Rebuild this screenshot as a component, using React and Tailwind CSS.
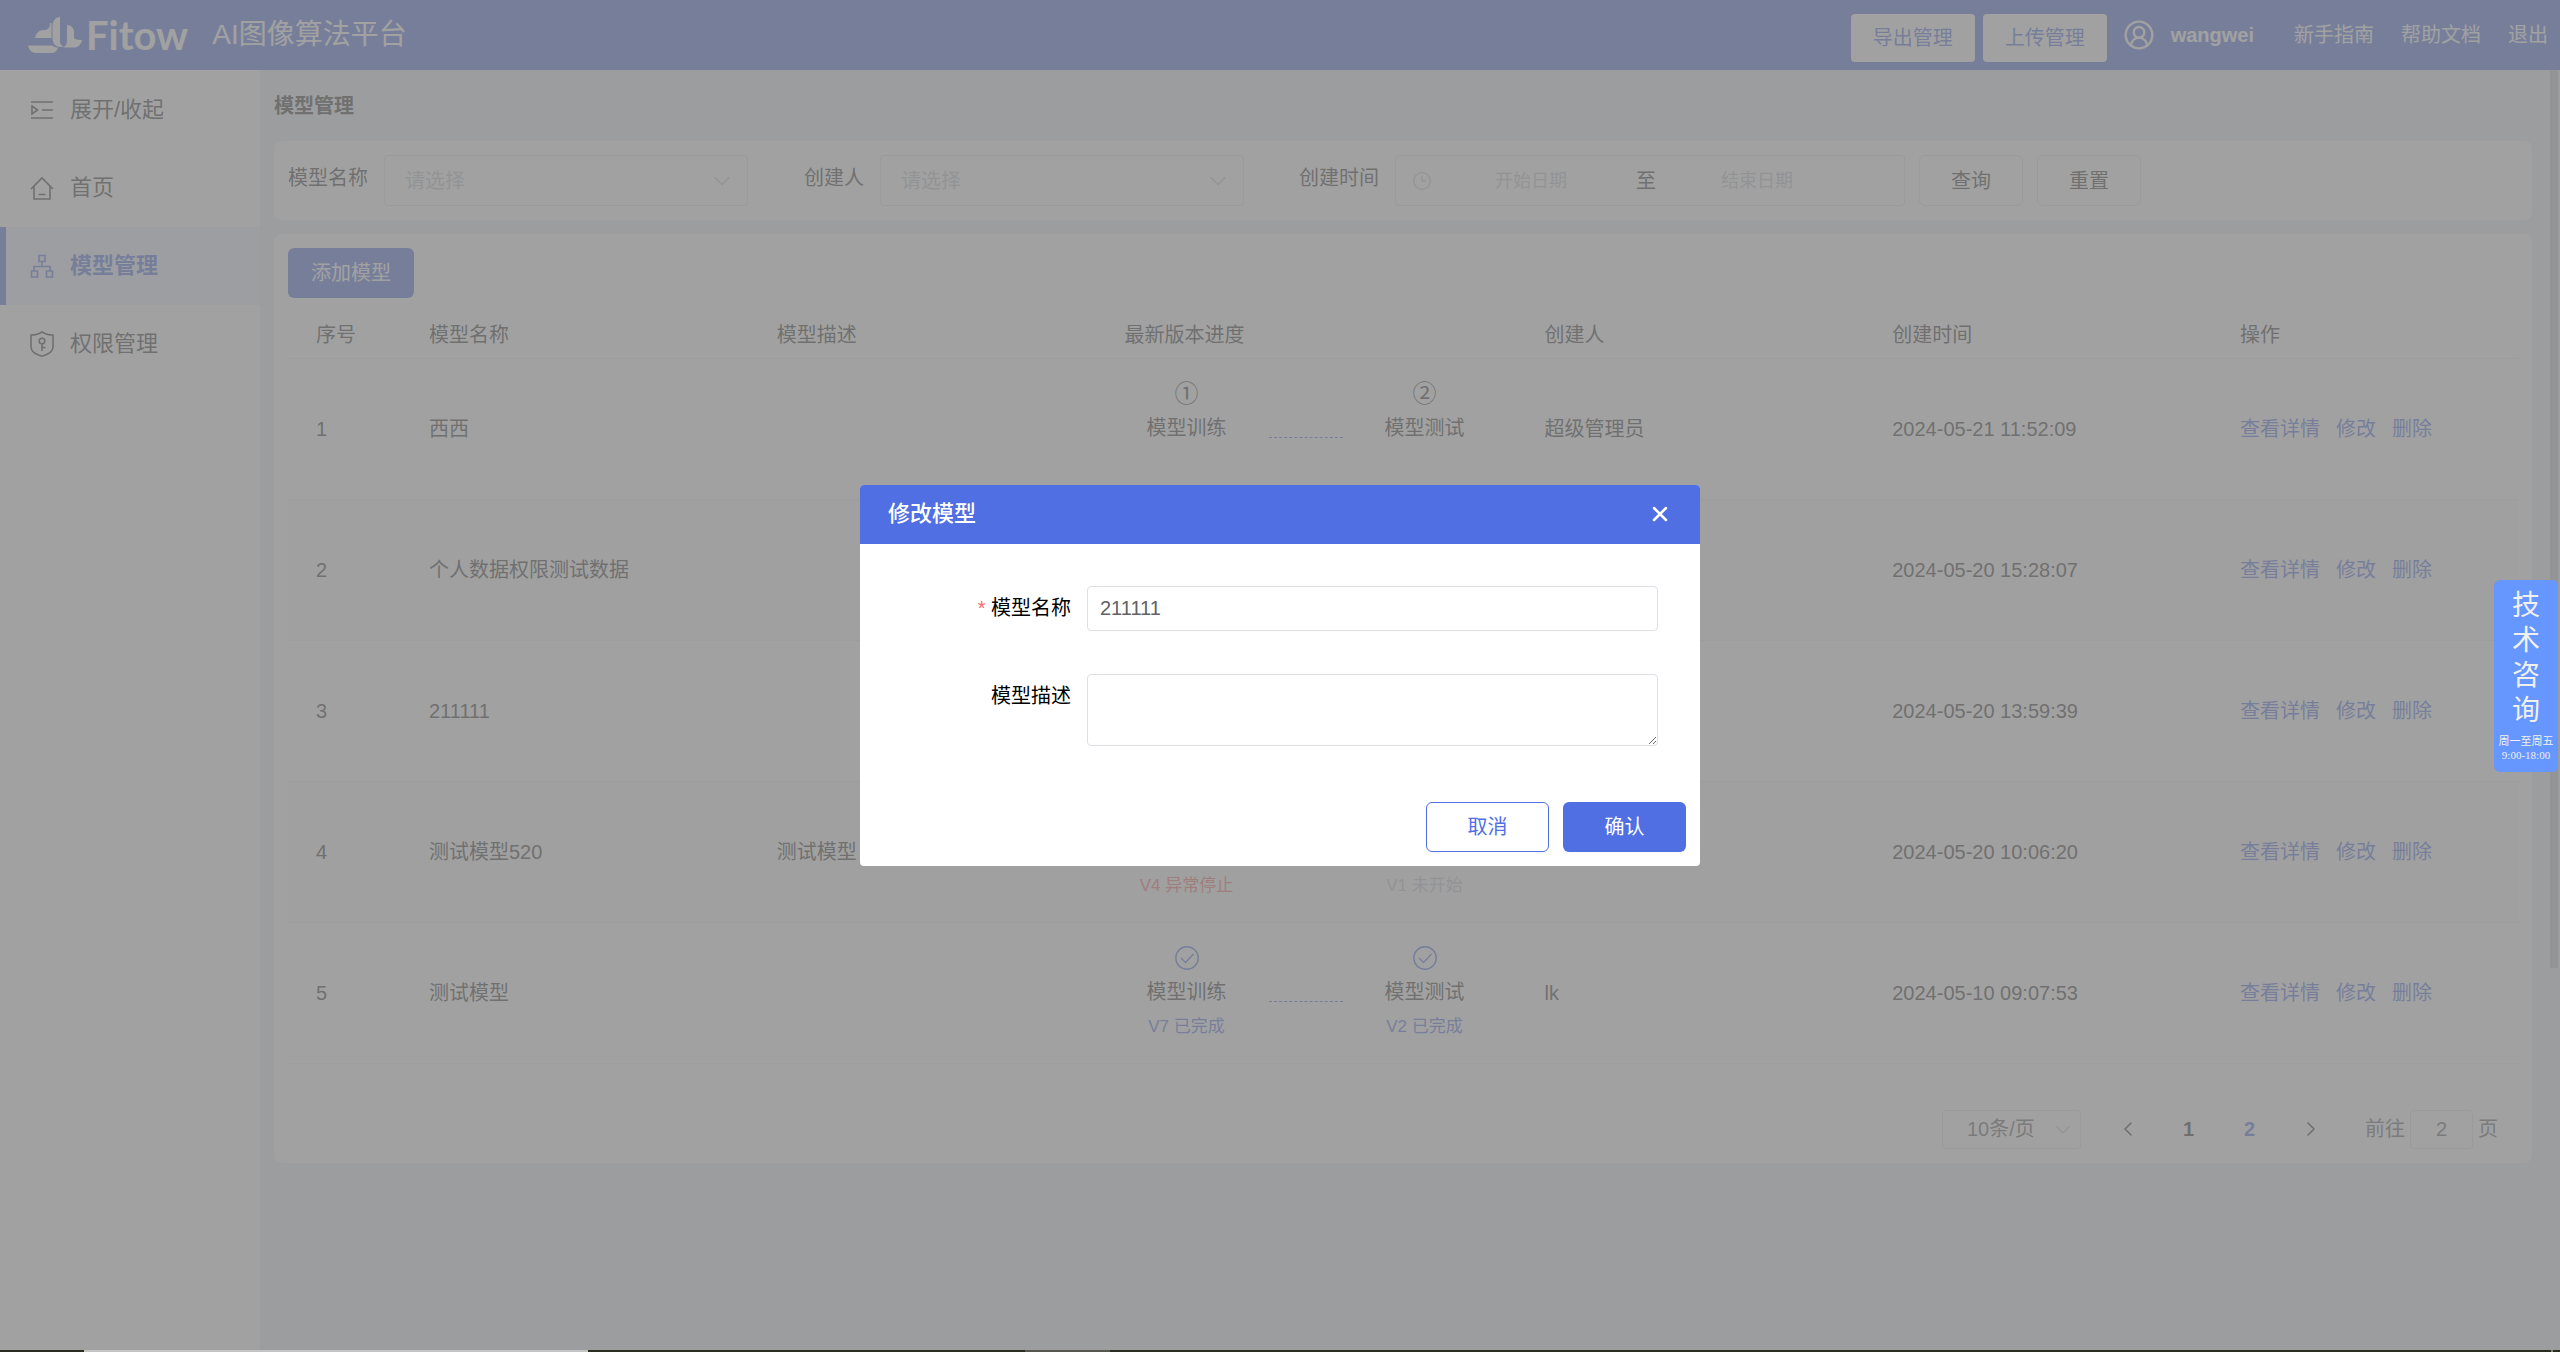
import { useState } from "react";
import { ChevronDown, ChevronLeft, ChevronRight, CircleUserRound, Clock3, X } from "lucide-react";

const menus = [
  { name: "展开/收起", icon: "fold" },
  { name: "首页", icon: "home" },
  { name: "模型管理", icon: "model" },
  { name: "权限管理", icon: "auth" },
];

const models = [
  {
    id: 1,
    name: "西西",
    desc: "",
    steps: [
      { label: "模型训练", mark: "①" },
      { label: "模型测试", mark: "②" },
    ],
    creator: "超级管理员",
    time: "2024-05-21 11:52:09",
  },
  { id: 2, name: "个人数据权限测试数据", desc: "", steps: [], creator: "", time: "2024-05-20 15:28:07" },
  { id: 3, name: "211111", desc: "", steps: [], creator: "", time: "2024-05-20 13:59:39" },
  {
    id: 4,
    name: "测试模型520",
    desc: "测试模型",
    steps: [
      { label: "", status: "V4 异常停止", color: "text-[#f56c6c]" },
      { label: "", status: "V1 未开始", color: "text-[#c0c4cc]" },
    ],
    creator: "",
    time: "2024-05-20 10:06:20",
  },
  {
    id: 5,
    name: "测试模型",
    desc: "",
    steps: [
      { label: "模型训练", done: true, status: "V7 已完成", color: "text-[#4f6fe3]" },
      { label: "模型测试", done: true, status: "V2 已完成", color: "text-[#4f6fe3]" },
    ],
    creator: "lk",
    time: "2024-05-10 09:07:53",
  },
];

const MenuIcon = ({ type }) => (
  <svg viewBox="0 0 24 26" className="h-[26px] w-6" fill="none" stroke="currentColor" strokeWidth="1.6">
    {type === "fold" && <path d="M1 5h22M12 13h11M1 21h22M2 9l5.500 4L2 17z" />}
    {type === "home" && <path d="M1 14L12 3l11 11M4 11.500V24h16V11.500M8.500 19.500h7" />}
    {type === "model" && (
      <path d="M9 2.500h6v6H9zM12 8.500v5M4 18v-4.500h16V18M1.500 18h6v6h-6zM16.500 18h6v6h-6z" />
    )}
    {type === "auth" && (
      <>
        <path d="M12 1c3 2 7 3 11 3v12c0 4-5 7.500-11 9.200C6 23.500 1 20 1 16V4c4 0 8-1 11-3z" />
        <circle cx="12" cy="10" r="2.800" />
        <path d="M12 13v7M12 16.500h3.500" />
      </>
    )}
  </svg>
);

const DoneIcon = () => (
  <svg viewBox="0 0 24 24" className="size-6 text-[#4f6fe3]" fill="none" stroke="currentColor" strokeWidth="1.4">
    <circle cx="12" cy="12" r="11.200" />
    <path d="M6 12l4.500 4.500L18.500 8" />
  </svg>
);

const Logo = () => (
  <div className="flex items-center gap-1 text-white">
    <svg viewBox="0 0 54 36" className="h-9 w-[54px]" fill="currentColor">
      <path d="M0 28.500h24c2 1.500 4 2 6 2-1 3.500-3 5.500-7 5.500H9c-5 0-8-2.500-9-7.500z" />
      <path d="M7 21c1-5 4-8 9-8 4 0 6-2 6-7h1.500v15z" />
      <path d="M24.500 21V9c0-5 3-9 7.500-9v25c0 2 2 4.500 4 4.500-1 .5-2 .5-4 .5-4.500 0-7.500-4-7.500-9z" />
      <path d="M39 8c4 0 7 3 7 7v6c1 1.500 4 2 8 2-1 5-4 7.500-8 7.500H35c3-1.500 4-4 4-7z" />
    </svg>
    <span className="font-['Lato',sans-serif] text-[40px] leading-[40px] font-bold">Fitow</span>
  </div>
);

const Header = () => (
  <header className="flex h-[70px] shrink-0 items-center bg-[#4f6fe3] pr-3 pl-7 text-xl text-white">
    <Logo />
    <h1 className="ml-6 text-[28px]">AI图像算法平台</h1>
    <div className="ml-auto flex items-center gap-2 pt-1.5">
      <button className="h-12 w-[124px] rounded bg-white text-[#4f6fe3]">导出管理</button>
      <button className="h-12 w-[124px] rounded bg-white text-[#4f6fe3]">上传管理</button>
    </div>
    <CircleUserRound className="ml-4 size-8" strokeWidth={1.8} />
    <span className="ml-4 font-bold">wangwei</span>
    <nav className="ml-10 flex gap-[27px]">
      <a href="#guide">新手指南</a>
      <a href="#docs">帮助文档</a>
      <a href="#logout">退出</a>
    </nav>
  </header>
);

const Sidebar = () => (
  <aside className="w-[260px] shrink-0 bg-white pt-px text-[22px]">
    {menus.map((menu) => (
      <a
        key={menu.name}
        href={`#${menu.icon}`}
        className={`flex h-[78px] items-center gap-4 border-l-[6px] pl-6 ${
          menu.icon === "model"
            ? "border-[#4f6fe3] bg-[#edf1fd] font-bold text-[#4f6fe3]"
            : "border-transparent text-[#333]"
        }`}
      >
        <MenuIcon type={menu.icon} />
        <span>{menu.name}</span>
      </a>
    ))}
  </aside>
);

const FilterSelect = ({ id, label }) => (
  <div className="flex items-center">
    <label htmlFor={id} className="mr-4 mb-1.5">{label}</label>
    <div className="relative">
      <select
        id={id}
        className="h-[51px] w-[364px] appearance-none rounded border border-[#dcdfe6] bg-white px-5 text-[#c0c4cc]"
      >
        <option>请选择</option>
      </select>
      <ChevronDown className="pointer-events-none absolute top-3 right-3 size-7 text-[#c0c4cc]" strokeWidth={1.2} />
    </div>
  </div>
);

const FilterBar = () => (
  <section className="flex h-[79px] items-center rounded-lg bg-white px-3.5">
    <FilterSelect id="model" label="模型名称" />
    <div className="w-14" />
    <FilterSelect id="creator" label="创建人" />
    <label htmlFor="start" className="mr-4 mb-1.5 ml-[55px]">创建时间</label>
    <div className="flex h-[51px] w-[510px] items-center rounded border border-[#dcdfe6] pl-4">
      <Clock3 className="size-5 text-[#c0c4cc]" strokeWidth={1.5} />
      <input id="start" placeholder="开始日期" className="w-[198px] text-center text-lg placeholder:text-[#c0c4cc]" />
      <span className="w-8 text-center">至</span>
      <input aria-label="结束日期" placeholder="结束日期" className="w-[190px] text-center text-lg placeholder:text-[#c0c4cc]" />
    </div>
    <button className="ml-3.5 h-[51px] w-[104px] rounded-md border border-[#dcdfe6]">查询</button>
    <button className="ml-3.5 h-[51px] w-[104px] rounded-md border border-[#dcdfe6]">重置</button>
  </section>
);

const Step = ({ step }) => (
  <div className="flex w-[124px] flex-col items-center">
    <div className="flex h-[34px] items-center text-2xl leading-6">
      {step.mark}
      {step.done && <DoneIcon />}
    </div>
    <div className="h-[35px] leading-[35px]">{step.label}</div>
    <div className={`h-[34px] text-[17px] leading-[34px] ${step.color || ""}`}>{step.status}</div>
  </div>
);

const ModelTable = () => (
  <table className="w-full table-fixed text-left">
    <thead>
      <tr className="h-[60px] border-b border-[#ebeef5]">
        <th className="w-[127px] pt-3.5 pl-7 font-normal">序号</th>
        <th className="pt-3.5 pl-3.5 font-normal">模型名称</th>
        <th className="pt-3.5 pl-3.5 font-normal">模型描述</th>
        <th className="w-[420px] pt-3.5 pl-3.5 font-normal">最新版本进度</th>
        <th className="pt-3.5 pl-3.5 font-normal">创建人</th>
        <th className="pt-3.5 pl-3.5 font-normal">创建时间</th>
        <th className="w-[292px] pt-3.5 pl-3.5 font-normal">操作</th>
      </tr>
    </thead>
    <tbody>
      {models.map((model) => (
        <tr key={model.id} className="h-[141px] border-b border-[#ebeef5] even:bg-[#fafafa]">
          <td className="pl-7">{model.id}</td>
          <td className="pl-3.5">{model.name}</td>
          <td className="pl-3.5">{model.desc}</td>
          <td className="pl-3.5">
            {model.steps.length > 0 && (
              <div className="flex items-center gap-5">
                <Step step={model.steps[0]} />
                <div className="mt-[18px] w-[74px] border-t border-dashed border-[#4f6fe3]" />
                <Step step={model.steps[1]} />
              </div>
            )}
          </td>
          <td className="pl-3.5">{model.creator}</td>
          <td className="pl-3.5">{model.time}</td>
          <td className="pl-3.5 text-[#4f6fe3]">
            <div className="flex gap-4">
              <button>查看详情</button>
              <button>修改</button>
              <button>删除</button>
            </div>
          </td>
        </tr>
      ))}
    </tbody>
  </table>
);

const Pagination = () => (
  <div className="mt-[46px] flex items-center justify-end pr-5 text-[#606266]">
    <div className="relative mr-4">
      <select
        aria-label="每页条数"
        className="h-[39px] w-[139px] appearance-none rounded border border-[#dcdfe6] bg-white pl-6"
      >
        <option>10条/页</option>
      </select>
      <ChevronDown className="pointer-events-none absolute top-2 right-1.5 size-6 text-[#c0c4cc]" strokeWidth={1.3} />
    </div>
    <button aria-label="上一页" className="flex w-[61px] justify-center text-[#303133]">
      <ChevronLeft className="size-6" strokeWidth={1.6} />
    </button>
    <button className="w-[61px] font-bold text-[#303133]">1</button>
    <button className="w-[61px] font-bold text-[#4f6fe3]">2</button>
    <button aria-label="下一页" className="flex w-[61px] justify-center text-[#303133]">
      <ChevronRight className="size-6" strokeWidth={1.6} />
    </button>
    <label htmlFor="jump" className="ml-6">前往</label>
    <input
      id="jump"
      defaultValue="2"
      className="mx-[5px] h-[39px] w-[63px] rounded border border-[#dcdfe6] text-center"
    />
    <span>页</span>
  </div>
);

const EditDialog = () => {
  const [name, setName] = useState("211111");
  const [desc, setDesc] = useState("");

  return (
    <div role="dialog" aria-labelledby="dialog-title" className="w-[840px] overflow-hidden rounded bg-white">
      <div className="flex h-[59px] items-center justify-between bg-[#4f6fe3] px-7 text-white">
        <h2 id="dialog-title" className="text-[22px] font-medium">修改模型</h2>
        <button aria-label="关闭">
          <X className="size-6" strokeWidth={2.5} />
        </button>
      </div>
      <form className="pt-[42px] pr-[42px] pl-[99px] text-black">
        <div className="flex items-start">
          <label htmlFor="name" className="w-28 text-right leading-[45px]">
            <span className="text-[#f56c6c]">*</span> 模型名称
          </label>
          <input
            id="name"
            value={name}
            onChange={(e) => setName(e.target.value)}
            className="ml-4 h-[45px] flex-1 rounded border border-[#dcdfe6] px-3 text-[#606266]"
          />
        </div>
        <div className="mt-[43px] flex items-start">
          <label htmlFor="desc" className="w-28 text-right leading-[45px]">模型描述</label>
          <textarea
            id="desc"
            value={desc}
            onChange={(e) => setDesc(e.target.value)}
            className="ml-4 h-[72px] flex-1 rounded border border-[#dcdfe6] px-3"
          />
        </div>
      </form>
      <div className="mt-14 flex justify-end gap-3.5 p-3.5 pt-0">
        <button className="h-[50px] w-[123px] rounded-md border border-[#4f6fe3] text-[#4f6fe3]">取消</button>
        <button className="h-[50px] w-[123px] rounded-md bg-[#4f6fe3] text-white">确认</button>
      </div>
    </div>
  );
};

const App = () => {
  return (
    <div className="flex min-h-screen flex-col font-['Liberation_Sans','Noto_Sans_CJK_SC',sans-serif] text-xl text-[#333]">
      <Header />
      <div className="relative flex flex-1 bg-[#e9eef3]">
        <Sidebar />
        <main className="flex-1 pr-7 pl-3.5">
          <h2 className="h-[71px] pt-[22px] font-bold">模型管理</h2>
          <FilterBar />
          <section className="mt-3.5 rounded-lg bg-white p-3.5">
            <button className="block h-[50px] w-[126px] rounded-md bg-[#4f6fe3] text-white">添加模型</button>
            <ModelTable />
            <Pagination />
          </section>
        </main>
        {/* scrollbar thumb */}
        <div className="absolute top-0 right-0.5 h-[898px] w-2 bg-[#c8cacd]" />
      </div>
      <footer className="flex h-0.5 bg-[#2a2e22]">
        <div className="ml-[84px] w-[504px] bg-[#c4c4c4]" />
        <div className="ml-[437px] w-[85px] bg-[#57574f]" />
        <div className="mr-[7px] ml-auto w-0.5 bg-[#85877f]" />
      </footer>

      <div className="fixed inset-x-0 top-0 bottom-0.5 flex items-center justify-center bg-[rgba(131,131,131,0.76)]">
        <EditDialog />
      </div>
      <a
        href="#contact"
        className="fixed top-[580px] right-0.5 flex h-48 w-16 flex-col items-center rounded-md bg-[#6696ff] pt-2 text-[#f0f0f0]"
      >
        <span className="w-7 text-[28px] leading-[35px]">技术咨询</span>
        <span className="mt-1.5 text-[11px] leading-[14px]">周一至周五</span>
        <span className="font-['Liberation_Serif',serif] text-[11px] leading-[14px]">9:00-18:00</span>
      </a>
    </div>
  );
};

export default App;
